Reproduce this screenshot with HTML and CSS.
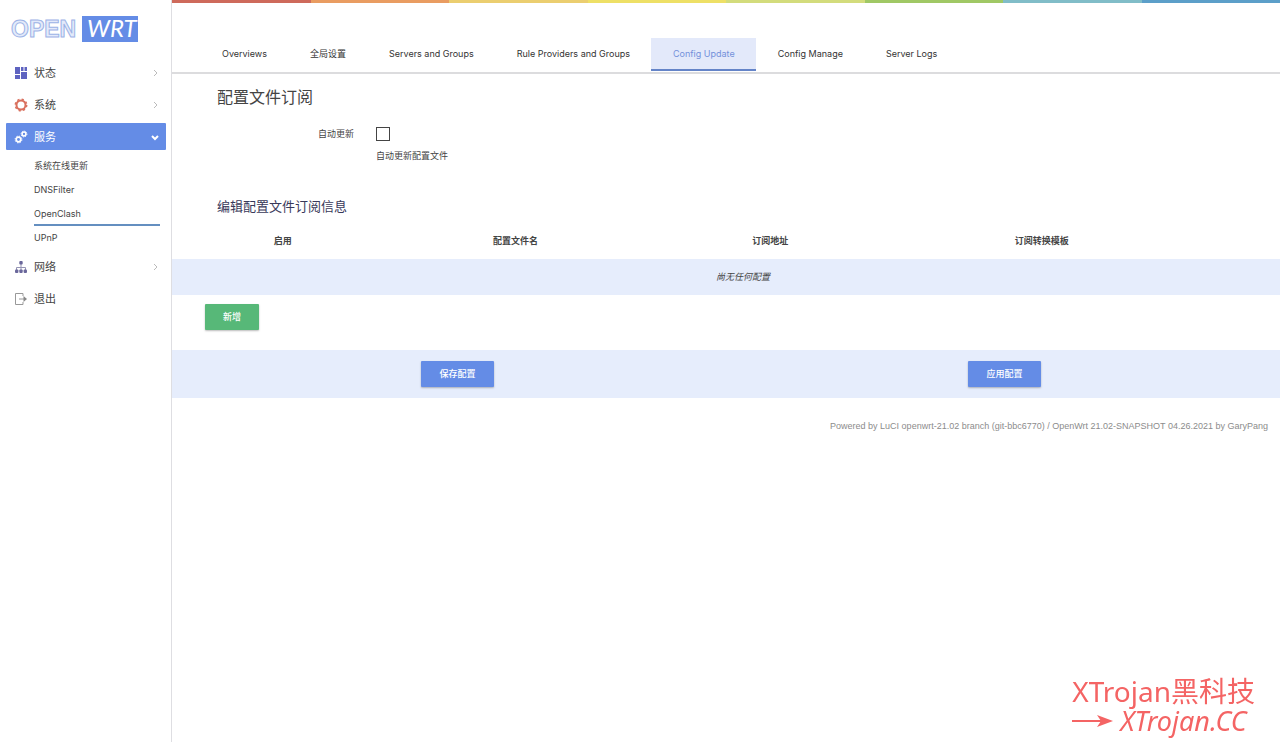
FILE: index.html
```html
<!DOCTYPE html>
<html lang="zh-CN">
<head>
<meta charset="utf-8">
<title>OpenWrt - OpenClash</title>
<link rel="stylesheet" href="styles.css">
</head>
<body>
<div class="layout">
  <aside class="sidebar">
    <a class="brand" href="#" aria-label="OpenWrt">
      <svg class="brand-logo" width="128" height="28" viewBox="0 0 128 28">
        <text class="brand-open" x="1" y="21">OPEN</text>
        <rect x="72" y="0" width="56" height="26" fill="#648ce6"/>
        <text class="brand-wrt" x="77" y="21">WRT</text>
      </svg>
    </a>
    <nav class="menu">
      <a class="item" href="#">
        <svg class="icon" viewBox="0 0 14 14"><path fill="#5e63c0" d="M1 1h5v7H1zM7 1h6v4H7zM1 9h5v4H1zM7 6h6v7H7z"/><path stroke="#fff" stroke-width="1" d="M10 1v4"/></svg>
        <span>状态</span>
        <svg class="arrow" viewBox="0 0 8 8"><path d="M3 1l3 3-3 3"/></svg>
      </a>
      <a class="item" href="#">
        <svg class="icon" viewBox="0 0 14 14" fill="none" stroke="#d9705e"><circle cx="7" cy="7" r="4.500" stroke-width="2"/><circle cx="7" cy="7" r="5.700" stroke-width="1.500" stroke-dasharray="2.200 2.276"/></svg>
        <span>系统</span>
        <svg class="arrow" viewBox="0 0 8 8"><path d="M3 1l3 3-3 3"/></svg>
      </a>
      <a class="item item-active" href="#">
        <svg class="icon" viewBox="0 0 14 14" fill="none" stroke="#fff"><circle cx="4.500" cy="9.500" r="2.300" stroke-width="1.700"/><circle cx="4.500" cy="9.500" r="3.400" stroke-width="1" stroke-dasharray="1.400 1.270"/><circle cx="10" cy="4" r="1.900" stroke-width="1.500"/><circle cx="10" cy="4" r="2.900" stroke-width="1" stroke-dasharray="1.200 1.080"/></svg>
        <span>服务</span>
        <svg class="arrow" viewBox="0 0 8 8"><path d="M1 3l3 3 3-3"/></svg>
      </a>
      <div class="submenu">
        <a class="subitem" href="#">系统在线更新</a>
        <a class="subitem" href="#">DNSFilter</a>
        <a class="subitem subitem-active" href="#">OpenClash</a>
        <a class="subitem" href="#">UPnP</a>
      </div>
      <a class="item" href="#">
        <svg class="icon" viewBox="0 0 14 14"><path fill="none" stroke="#9594b4" d="M7 3v7M2.500 10V7.500h9V10"/><g fill="#6a679b"><rect x="5.300" y="1" width="3.400" height="3.400" rx="1"/><rect x="1" y="9.500" width="3.400" height="3.400" rx="1"/><rect x="5.300" y="9.500" width="3.400" height="3.400" rx="1"/><rect x="9.600" y="9.500" width="3.400" height="3.400" rx="1"/></g></svg>
        <span>网络</span>
        <svg class="arrow" viewBox="0 0 8 8"><path d="M3 1l3 3-3 3"/></svg>
      </a>
      <a class="item" href="#">
        <svg class="icon" viewBox="0 0 14 14" fill="none" stroke="#999"><path d="M9 4V1.500H1.500v11H9V10M5 7h6"/><path fill="#888" stroke="none" d="M9.500 4L13 7l-3.500 3z"/></svg>
        <span>退出</span>
      </a>
    </nav>
  </aside>

  <main class="main">
    <div class="strip"><i class="c1"></i><i class="c2"></i><i class="c3"></i><i class="c4"></i><i class="c5"></i><i class="c6"></i><i class="c7"></i><i class="c8"></i></div>
    <nav class="tabs">
      <a class="tab" href="#">Overviews</a>
      <a class="tab" href="#">全局设置</a>
      <a class="tab" href="#">Servers and Groups</a>
      <a class="tab" href="#">Rule Providers and Groups</a>
      <a class="tab tab-active" href="#">Config Update</a>
      <a class="tab" href="#">Config Manage</a>
      <a class="tab" href="#">Server Logs</a>
    </nav>

    <section class="section">
      <h2 class="title">配置文件订阅</h2>
      <div class="field">
        <label class="field-label" for="auto">自动更新</label>
        <div class="field-value">
          <input class="check" type="checkbox" id="auto">
          <p class="hint">自动更新配置文件</p>
        </div>
      </div>
    </section>

    <section class="section">
      <h3 class="subtitle">编辑配置文件订阅信息</h3>
      <table class="table">
        <colgroup><col class="w1"><col class="w2"><col class="w3"><col class="w4"><col></colgroup>
        <thead><tr><th>启用</th><th>配置文件名</th><th>订阅地址</th><th>订阅转换模板</th><td></td></tr></thead>
        <tbody><tr><td class="empty" colspan="5"><em>尚无任何配置</em></td></tr></tbody>
      </table>
      <div class="add-row"><button class="btn btn-add" type="button">新增</button></div>
    </section>

    <div class="actions">
      <button class="btn" type="button">保存配置</button>
      <button class="btn" type="button">应用配置</button>
    </div>

    <footer class="footer"><a href="#">Powered by LuCI openwrt-21.02 branch (git-bbc6770)</a> / OpenWrt 21.02-SNAPSHOT 04.26.2021 by GaryPang</footer>
  </main>
</div>

<div class="watermark">
  <div>XTrojan黑科技</div>
  <div class="watermark-site">
    <svg width="42" height="16" viewBox="0 0 42 16"><path d="M0 8h32" stroke="#f46464" stroke-width="2"/><path d="M25 2l16 6-16 6 4-6z" fill="#f46464"/></svg>
    <span>XTrojan.CC</span>
  </div>
</div>
</body>
</html>
```

FILE: styles.css
```css
* {
  box-sizing: border-box;
}

body {
  margin: 0;
  background: #fff;
  color: #444;
  font: 9px/14px Inter, "Noto Sans CJK SC", sans-serif;
}

a {
  color: inherit;
  text-decoration: none;
}

.layout {
  display: flex;
  min-height: 100vh;
}

.sidebar {
  flex: none;
  width: 172px;
  padding: 16px 6px 0;
  border-right: 1px solid #dedee2;
}

.brand {
  display: block;
  height: 43px;
  padding-left: 4px;
}

.brand-logo {
  overflow: visible;
}

.brand-open {
  font: 700 23px "Liberation Sans", sans-serif;
  fill: #e3eafa;
  stroke: #9db3e6;
  stroke-width: 1px;
}

.brand-wrt {
  font: italic 24px Lato, sans-serif;
  fill: #fff;
}

.menu {
  display: flex;
  flex-direction: column;
  gap: 5px;
}

.item {
  display: flex;
  align-items: center;
  gap: 6px;
  height: 27px;
  padding: 0 7px 0 8px;
  font-size: 11px;
  margin-right: -1px;
}

.item-active {
  background: #648ce6;
  color: #fff;
  border-radius: 1px;
}

.icon {
  width: 14px;
  height: 14px;
}

.arrow {
  width: 8px;
  height: 8px;
  margin-left: auto;
  fill: none;
  stroke: #bbb;
}

.item-active .arrow {
  stroke: #fff;
  stroke-width: 2px;
}

.submenu {
  margin: -1px 5px -2px 28px;
}

.subitem {
  display: block;
  padding: 3px 0;
  border: solid transparent;
  border-width: 2px 0;
}

.subitem-active {
  border-bottom-color: #648fc0;
}

.main {
  flex: 1;
  min-width: 0;
}

.strip {
  display: flex;
  height: 3px;
}

.strip i {
  flex: 1;
}

.c1 { background: #ce6a5b; }
.c2 { background: #e99c61; }
.c3 { background: #ebce70; }
.c4 { background: #eee066; }
.c5 { background: #d3dc7c; }
.c6 { background: #a0c865; }
.c7 { background: #81bdc8; }
.c8 { background: #5c9fc9; }

.tabs {
  display: flex;
  padding: 35px 28px 0;
  border-bottom: 2px solid #dcdcde;
}

.tab {
  padding: 9px 21px 10px 22px;
  margin-bottom: 1px;
  color: #333;
}

.tab-active {
  padding-bottom: 8px;
  background: #e3e9fa;
  border-bottom: 2px solid #6484c8;
  color: #7391da;
}

.title {
  margin: 0;
  padding: 12px 45px;
  font-size: 16px;
  line-height: 22px;
  font-weight: 400;
}

.field {
  display: flex;
  gap: 22px;
  margin-bottom: 28px;
  padding: 7px 0;
}

.field-label {
  width: 182px;
  text-align: right;
}

.check {
  display: block;
  appearance: none;
  width: 14px;
  height: 14px;
  margin: 0 0 8px;
  border: 1px solid #444;
  background: #fff;
}

.hint {
  margin: 0;
}

.subtitle {
  margin: 0;
  padding: 0 45px;
  font-size: 13px;
  line-height: 16px;
  font-weight: 400;
  color: #39395a;
}

.table {
  width: 100%;
  table-layout: fixed;
  border-collapse: collapse;
}

.w1 { width: 20%; }
.w2 { width: 22%; }
.w3 { width: 24%; }
.w4 { width: 25%; }

.table th {
  padding: 20px 0 11px;
  font-weight: 700;
}

.table .empty {
  padding: 11px 0 11px 34px;
  background: #e6edfc;
  text-align: center;
}

.add-row {
  display: flex;
  padding: 9px 33px 20px;
}

.btn {
  justify-self: center;
  height: 26px;
  padding: 0 18px 1px;
  border: 0;
  border-radius: 1px;
  background: #648ce6;
  box-shadow: 0 1px 2px #0004;
  color: #fff;
  font: inherit;
  font-weight: 500;
}

.btn-add {
  background: #57b878;
}

.actions {
  display: grid;
  grid-template-columns: 1fr 1fr;
  padding: 11px 2px 11px 12px;
  background: #e6edfc;
}

.footer {
  padding: 21px 12px;
  color: #8c8c8c;
  font-family: "Liberation Sans", sans-serif;
  text-align: right;
}

.watermark {
  position: fixed;
  right: 25px;
  bottom: 6px;
  color: #f46464;
  font: 28px/30px "Noto Sans", "Noto Sans CJK SC", sans-serif;
}

.watermark-site {
  display: flex;
  align-items: center;
  gap: 6px;
  font-size: 27px;
  font-style: italic;
}
```
